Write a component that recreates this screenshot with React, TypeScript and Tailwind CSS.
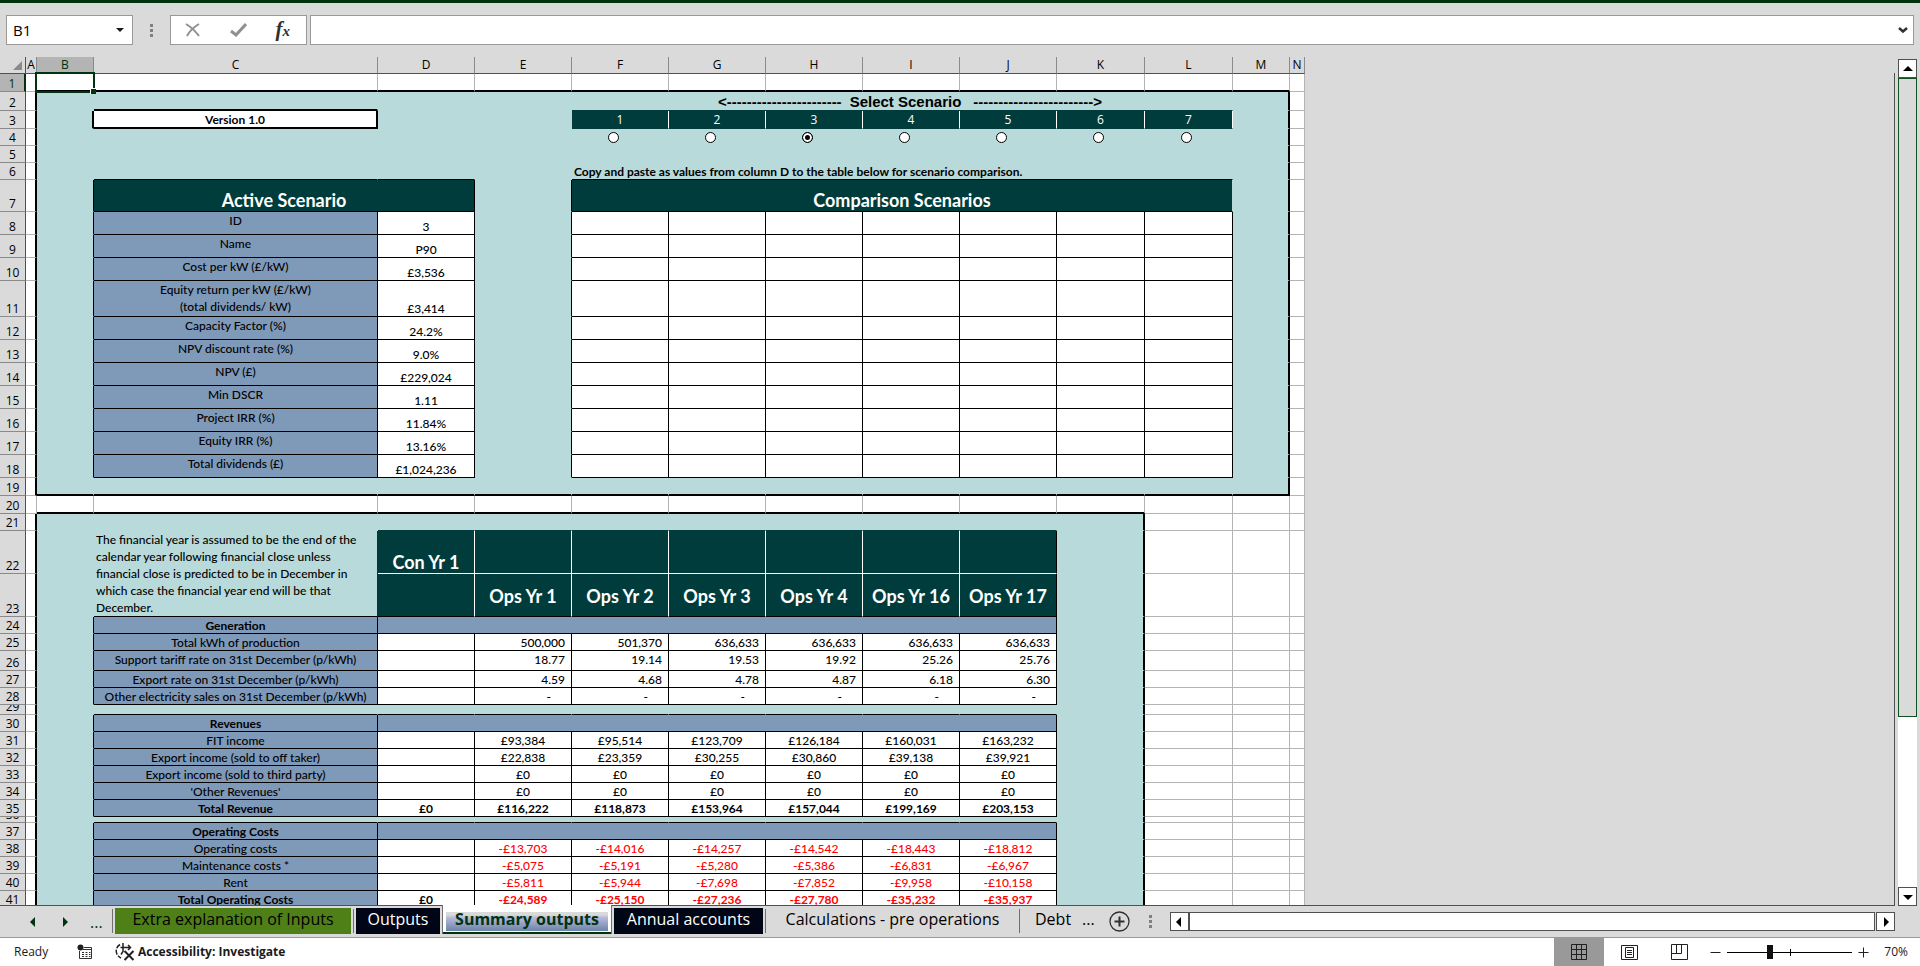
import type { ReactNode } from 'react';
import { clsx } from 'clsx';

const COLS = [
  { id: 'A', w: 11 },
  { id: 'B', w: 57 },
  { id: 'C', w: 284 },
  { id: 'D', w: 97 },
  { id: 'E', w: 97 },
  { id: 'F', w: 97 },
  { id: 'G', w: 97 },
  { id: 'H', w: 97 },
  { id: 'I', w: 97 },
  { id: 'J', w: 97 },
  { id: 'K', w: 88 },
  { id: 'L', w: 88 },
  { id: 'M', w: 57 },
  { id: 'N', w: 15 },
];
const HEADER_W = 26;
const SHEET_W = COLS.reduce((sum, c) => sum + c.w, HEADER_W);

// column indexes
const [A, B, C, D, E, F, , , , J, K, L, M] = COLS.map((_, i) => i);

const ROW_HEIGHTS = [
  18, 19, 18, 17, 17, 17, 32, 23, 23, 23, 36, 23, 23, 23, 23, 23, 23, 23, 18, 18, 17, 43, 43, 17, 17, 20, 17, 17, 10,
  17, 17, 17, 17, 17, 17, 6, 17, 17, 17, 17, 17,
];

const ACTIVE: Record<number, [string, string]> = {
  8: ['ID', '3'],
  9: ['Name', 'P90'],
  10: ['Cost per kW (£/kW)', '£3,536'],
  11: ['Equity return per kW (£/kW)\n(total dividends/ kW)', '£3,414'],
  12: ['Capacity Factor (%)', '24.2%'],
  13: ['NPV discount rate (%)', '9.0%'],
  14: ['NPV (£)', '£229,024'],
  15: ['Min DSCR', '1.11'],
  16: ['Project IRR (%)', '11.84%'],
  17: ['Equity IRR (%)', '13.16%'],
  18: ['Total dividends (£)', '£1,024,236'],
};

const SECTIONS: Record<number, string> = { 24: 'Generation', 30: 'Revenues', 37: 'Operating Costs' };

const YEARS = ['', 'Ops Yr 1', 'Ops Yr 2', 'Ops Yr 3', 'Ops Yr 4', 'Ops Yr 16', 'Ops Yr 17'];

const YEAR_NOTE = [
  'The financial year is assumed to be the end of the',
  'calendar year following financial close unless',
  'financial close is predicted to be in December in',
  'which case the financial year end will be that',
  'December.',
].join('\n');

// label, then one value for each of D..J
const LINES: Record<number, string[]> = {
  25: ['Total kWh of production', '', '500,000', '501,370', '636,633', '636,633', '636,633', '636,633'],
  26: ['Support tariff rate on 31st December (p/kWh)', '', '18.77', '19.14', '19.53', '19.92', '25.26', '25.76'],
  27: ['Export rate on 31st December (p/kWh)', '', '4.59', '4.68', '4.78', '4.87', '6.18', '6.30'],
  28: ['Other electricity sales on 31st December (p/kWh)', '', '-', '-', '-', '-', '-', '-'],
  31: ['FIT income', '', '£93,384', '£95,514', '£123,709', '£126,184', '£160,031', '£163,232'],
  32: ['Export income (sold to off taker)', '', '£22,838', '£23,359', '£30,255', '£30,860', '£39,138', '£39,921'],
  33: ['Export income (sold to third party)', '', '£0', '£0', '£0', '£0', '£0', '£0'],
  34: ["'Other Revenues'", '', '£0', '£0', '£0', '£0', '£0', '£0'],
  35: ['Total Revenue', '£0', '£116,222', '£118,873', '£153,964', '£157,044', '£199,169', '£203,153'],
  38: ['Operating costs', '', '-£13,703', '-£14,016', '-£14,257', '-£14,542', '-£18,443', '-£18,812'],
  39: ['Maintenance costs *', '', '-£5,075', '-£5,191', '-£5,280', '-£5,386', '-£6,831', '-£6,967'],
  40: ['Rent', '', '-£5,811', '-£5,944', '-£7,698', '-£7,852', '-£9,958', '-£10,158'],
  41: ['Total Operating Costs', '£0', '-£24,589', '-£25,150', '-£27,236', '-£27,780', '-£35,232', '-£35,937'],
};
const TOTAL_ROWS = [35, 41];

const between = (n: number, lo: number, hi: number) => n >= lo && n <= hi;
const inTopFrame = (r: number, c: number) => between(r, 2, 19) && between(c, B, M);
const inLowerFrame = (r: number, c: number) => r >= 21 && between(c, B, K);

type Fill = 'white' | 'mint' | 'teal' | 'blue';

function fillOf(r: number, c: number): Fill {
  if (!inTopFrame(r, c) && !inLowerFrame(r, c)) return 'white';
  if (r === 3 && c === C) return 'white';
  if (r === 3 && between(c, F, L)) return 'teal';
  if (r === 7 && (between(c, C, D) || between(c, F, L))) return 'teal';
  if (between(r, 8, 18)) {
    if (c === C) return 'blue';
    if (c === D || between(c, F, L)) return 'white';
  }
  if (between(r, 22, 23) && between(c, D, J)) return 'teal';
  if (SECTIONS[r] && between(c, C, J)) return 'blue';
  if (LINES[r]) {
    if (c === C) return 'blue';
    if (between(c, D, J)) return 'white';
  }
  return 'mint';
}

function rightOf(r: number, c: number) {
  if (c === A && (between(r, 2, 19) || r >= 21)) return 'border-r-2 border-r-black';
  if (c === M && between(r, 2, 19)) return 'border-r-2 border-r-black';
  if (c === K && r >= 21) return 'border-r-2 border-r-black';
  if (r === 3 && (c === B || c === C)) return 'border-r-2 border-r-black';
  if (r === 3 && between(c, F, L)) return 'border-r border-r-white';
  if (r === 7 && (c === B || c === D || c === E)) return 'border-r border-r-black';
  if (between(r, 8, 18) && between(c, B, L)) return 'border-r border-r-black';
  if (between(r, 22, 23)) {
    if (c === C) return 'border-r border-r-[#003c3c]';
    if (between(c, D, J - 1)) return 'border-r border-r-white';
    if (c === J) return 'border-r border-r-black';
  }
  if ((SECTIONS[r] || LINES[r]) && between(c, B, J)) return 'border-r border-r-black';
  if (inTopFrame(r, c) || inLowerFrame(r, c)) return 'border-r border-r-[#b8dada]';
  return 'border-r border-r-[#b4b4b4]';
}

function bottomOf(r: number, c: number) {
  if ((r === 1 || r === 19) && between(c, B, M)) return 'border-b-2 border-b-black';
  if (r === 20 && between(c, B, K)) return 'border-b-2 border-b-black';
  if ((r === 2 || r === 3) && c === C) return 'border-b-2 border-b-black';
  if ((r === 2 || r === 3) && between(c, F, L)) return 'border-b border-b-[#003c3c]';
  if (r === 6 && (between(c, C, D) || between(c, F, L))) return 'border-b border-b-black';
  if (between(r, 7, 18) && (between(c, C, D) || between(c, F, L))) return 'border-b border-b-black';
  if (r === 21 && between(c, D, J)) return 'border-b border-b-[#003c3c]';
  if (r === 22 && between(c, D, J)) return 'border-b border-b-white';
  if (r >= 23 && between(c, C, J)) return 'border-b border-b-black';
  if (inTopFrame(r, c) || inLowerFrame(r, c)) return 'border-b border-b-[#b8dada]';
  return 'border-b border-b-[#b4b4b4]';
}

const FILLS: Record<Fill, string> = {
  white: 'bg-white',
  mint: 'bg-[#b8dada]',
  teal: 'bg-[#003c3c] text-white',
  blue: 'bg-[#7f99b8]',
};

const TITLE = 'justify-center text-[18px] leading-[22px] font-bold';

type Content = { node?: ReactNode; className?: string; colSpan?: number; rowSpan?: number };

function contentOf(r: number, c: number): Content {
  if (r === 2 && c === F) {
    return {
      colSpan: 7,
      className: "items-center justify-center gap-2 pl-4 font-['Liberation_Sans',sans-serif] text-[15px] font-bold",
      node: (
        <>
          <span>{'<' + '-'.repeat(23)}</span>
          <span>Select Scenario</span>
          <span className="pl-1">{'-'.repeat(24) + '>'}</span>
        </>
      ),
    };
  }
  if (r === 3 && c === C) return { node: 'Version 1.0', className: 'items-end justify-center font-bold' };
  if (r === 3 && between(c, F, L)) {
    return { node: c - E, className: "items-center justify-center font-['Open_Sans',sans-serif]" };
  }
  if (r === 4 && between(c, F, L)) {
    return {
      className: 'items-center pl-9',
      node: (
        <input
          type="radio"
          name="scenario"
          aria-label={`Scenario ${c - E}`}
          defaultChecked={c - E === 3}
          className="size-[11px] appearance-none rounded-full border border-black bg-white checked:bg-black checked:shadow-[inset_0_0_0_2px_white]"
        />
      ),
    };
  }
  if (r === 6 && c === F) {
    return {
      colSpan: 7,
      className: 'items-end pl-[2px] font-bold',
      node: 'Copy and paste as values from column D to the table below for scenario comparison.',
    };
  }
  if (r === 7 && c === C) return { colSpan: 2, node: 'Active Scenario', className: clsx('items-end', TITLE) };
  if (r === 7 && c === F) return { colSpan: 7, node: 'Comparison Scenarios', className: clsx('items-end', TITLE) };
  if (ACTIVE[r] && c === C) {
    return { node: ACTIVE[r][0], className: 'items-start justify-center whitespace-pre text-center leading-[17px]' };
  }
  if (ACTIVE[r] && c === D) return { node: ACTIVE[r][1], className: 'items-end justify-center' };
  if (r === 22 && c === C) {
    return { rowSpan: 2, className: 'items-end whitespace-pre pl-[2px] leading-[17px]', node: YEAR_NOTE };
  }
  if (r === 22 && c === D) return { node: 'Con Yr 1', className: clsx('items-end', TITLE) };
  if (r === 23 && between(c, D, J)) return { node: YEARS[c - D], className: clsx('items-center pt-[2px]', TITLE) };
  if (SECTIONS[r] && c === C) return { node: SECTIONS[r], className: 'items-end justify-center font-bold' };
  if (SECTIONS[r] && c === D) return { colSpan: 7 };
  if (LINES[r] && between(c, C, J)) {
    const isValue = c > C;
    return {
      node: LINES[r][c - C],
      className: clsx(
        r === 26 ? 'items-start leading-[17px]' : 'items-end',
        isValue && r <= 28 ? 'justify-end' : 'justify-center',
        isValue && r <= 27 && 'pr-[6px]',
        isValue && r === 28 && 'pr-5',
        TOTAL_ROWS.includes(r) && 'font-bold',
        c > D && r >= 38 && 'text-[#ff0000]',
      ),
    };
  }
  return {};
}

function Cell({ r, c, content }: { r: number; c: number; content: Content }) {
  const { node, className, colSpan = 1, rowSpan = 1 } = content;
  const bottom = bottomOf(r + rowSpan - 1, c);
  let height = ROW_HEIGHTS[r - 1] - (bottom.startsWith('border-b-2') ? 2 : 1);
  if (rowSpan > 1) height += ROW_HEIGHTS[r];
  const selected = r === 1 && c === B;
  return (
    <td
      colSpan={colSpan}
      rowSpan={rowSpan}
      className={clsx('p-0', FILLS[fillOf(r, c)], rightOf(r, c + colSpan - 1), bottom, selected && 'relative')}
    >
      <div className={clsx('flex overflow-hidden', className)} style={{ height }}>
        {node}
      </div>
      {selected && (
        <div className="absolute -top-[2px] -right-[2px] -bottom-[3px] -left-[2px] z-10 border-2 border-[#00330f]">
          <div className="absolute -right-[3px] -bottom-[3px] size-[6px] border-t border-l border-white bg-[#00330f]" />
        </div>
      )}
    </td>
  );
}

function SheetRow({ r }: { r: number }) {
  const cells: ReactNode[] = [];
  for (let c = A; c < COLS.length; c++) {
    if (r === 23 && c === C) continue; // covered by the note in C22
    const content = contentOf(r, c);
    cells.push(<Cell key={c} r={r} c={c} content={content} />);
    c += (content.colSpan ?? 1) - 1;
  }
  return (
    <tr>
      <th
        scope="row"
        className={clsx(
          "border-b p-0 font-['Open_Sans',sans-serif] font-normal",
          r === 1
            ? 'border-r-2 border-r-[#00330f] border-b-[#8a8a8a] bg-[#b4b4b4] text-[#00330f]'
            : 'border-r border-r-[#505050] border-b-[#8a8a8a]',
        )}
      >
        <div className="flex items-end justify-center overflow-hidden" style={{ height: ROW_HEIGHTS[r - 1] - 1 }}>
          {r}
        </div>
      </th>
      {cells}
    </tr>
  );
}

function Sheet() {
  return (
    <table
      className="table-fixed border-separate border-spacing-0 font-['Lato',sans-serif] text-[12px] leading-[15px] font-medium whitespace-nowrap text-black"
      style={{ width: SHEET_W }}
    >
      <colgroup>
        <col style={{ width: HEADER_W }} />
        {COLS.map((c) => (
          <col key={c.id} style={{ width: c.w }} />
        ))}
      </colgroup>
      <thead>
        <tr>
          <td className="border-r border-b border-r-[#505050] border-b-[#505050] p-0">
            <svg viewBox="0 0 25 16" className="block h-4 w-[25px]" aria-hidden="true">
              <path d="M22 4v9h-9z" fill="#8a8a8a" />
            </svg>
          </td>
          {COLS.map((c) => (
            <th
              key={c.id}
              scope="col"
              className={clsx(
                "border-r border-b border-r-[#8a8a8a] border-b-[#505050] p-0 font-['Open_Sans',sans-serif] font-normal",
                c.id === 'B' && 'bg-[#b4b4b4] text-[#00330f]',
              )}
            >
              <div className="flex h-4 items-start justify-center">{c.id}</div>
            </th>
          ))}
        </tr>
      </thead>
      <tbody>
        {ROW_HEIGHTS.map((_, i) => (
          <SheetRow key={i} r={i + 1} />
        ))}
      </tbody>
    </table>
  );
}

function Grip() {
  return (
    <div className="flex flex-col gap-[2px]">
      <span className="size-[3px] bg-[#808080]" />
      <span className="size-[3px] bg-[#808080]" />
      <span className="size-[3px] bg-[#808080]" />
    </div>
  );
}

function Arrow({ d, label, className }: { d: string; label: string; className?: string }) {
  return (
    <button
      type="button"
      aria-label={label}
      className={clsx('flex size-[19px] shrink-0 items-center justify-center', className)}
    >
      <svg viewBox="0 0 10 10" className="size-[10px]">
        <path d={d} fill="currentColor" />
      </svg>
    </button>
  );
}

function FormulaBar() {
  return (
    <div className="flex items-center py-3 pr-[6px] pl-[6px]">
      <div className="flex h-[30px] w-[127px] items-center border border-[#999] bg-white pr-2 pl-[6px]">
        <input
          aria-label="Name box"
          defaultValue="B1"
          className="w-0 flex-1 bg-transparent text-[15px] text-black outline-none"
        />
        <button type="button" aria-label="Named ranges">
          <svg viewBox="0 0 8 5" className="h-[5px] w-2">
            <path d="M0 0h8L4 4z" fill="#1a1a1a" />
          </svg>
        </button>
      </div>
      <div className="flex w-[37px] justify-center">
        <Grip />
      </div>
      <div className="mr-[3px] flex h-[30px] w-[137px] items-center justify-between border border-[#999] bg-white pr-4 pl-[14px]">
        <button type="button" aria-label="Cancel">
          <svg viewBox="0 0 16 14" className="h-[14px] w-4" fill="none" stroke="#909090" strokeWidth="2">
            <path d="M1 1c5 3 10 8 13 12M14 1C9 4 4 9 2 13" />
          </svg>
        </button>
        <button type="button" aria-label="Enter">
          <svg viewBox="0 0 17 14" className="h-[14px] w-[17px]" fill="none" stroke="#909090" strokeWidth="3">
            <path d="M1 8l5 4L16 1" />
          </svg>
        </button>
        <button
          type="button"
          aria-label="Insert function"
          className="pb-[2px] font-['Liberation_Serif',serif] text-[21px] leading-none font-bold text-[#303030] italic"
        >
          f<span className="text-[15px]">x</span>
        </button>
      </div>
      <div className="flex h-[30px] flex-1 items-center border border-[#999] bg-white pr-[5px]">
        <input aria-label="Formula bar" className="h-full w-0 flex-1 px-2 text-[15px] outline-none" />
        <button type="button" aria-label="Expand formula bar">
          <svg viewBox="0 0 10 6" className="h-[6px] w-[10px]" fill="none" stroke="#303030" strokeWidth="2.5">
            <path d="M1 1l4 3.5L9 1" />
          </svg>
        </button>
      </div>
    </div>
  );
}

function Divider() {
  return <span className="mt-[3px] h-6 w-px shrink-0 bg-[#707070]" />;
}

function SheetTabs() {
  return (
    <div className="flex h-8 items-start border-b border-[#999] text-[16px] leading-[22px] whitespace-nowrap text-black">
      <div className="flex w-28 items-center pt-[6px] pl-[23px] text-[#00330f]">
        <Arrow d="M7 0v10L2 5z" label="Previous sheet" />
        <Arrow d="M3 0v10l5-5z" label="Next sheet" className="ml-[13px]" />
        <button type="button" aria-label="More sheets to the left" className="ml-4 h-5 leading-4">
          ...
        </button>
      </div>
      <Divider />
      <button type="button" className="mt-[2px] ml-[2px] h-[26px] w-[236px] bg-[#4f7f17] pb-1 text-black">
        Extra explanation of Inputs
      </button>
      <span className="w-[2px]" />
      <Divider />
      <button type="button" className="mt-[2px] ml-[2px] h-[26px] w-[84px] bg-[#000615] pb-1 text-white">
        Outputs
      </button>
      <div className="relative z-10 -mt-px ml-[2px] w-[170px] border-x border-x-[#707070] bg-white pt-[7px]">
        <button
          type="button"
          aria-current="page"
          className="mx-[3px] block h-[19px] w-[162px] bg-linear-to-b from-[#dadada] from-15% via-[#b8b8dc] via-30% to-[#6a84a8] pb-1 leading-[15px] font-bold text-[#00330f]"
        >
          Summary outputs
        </button>
        <div className="mt-px h-[2px] bg-[#00330f]" />
      </div>
      <button type="button" className="mt-[2px] ml-[2px] h-[26px] w-[149px] bg-[#000615] pb-1 text-white">
        Annual accounts
      </button>
      <span className="w-[2px]" />
      <Divider />
      <button type="button" className="mt-[2px] w-[253px] text-center">
        Calculations - pre operations
      </button>
      <Divider />
      <button type="button" className="mt-[2px] ml-[15px]">
        Debt
      </button>
      <button type="button" aria-label="More sheets to the right" className="mt-[2px] ml-[11px]">
        ...
      </button>
      <button type="button" aria-label="New sheet" className="mt-[5px] ml-[14px]">
        <svg viewBox="0 0 21 21" className="size-[21px]" fill="none" stroke="#303030">
          <circle cx="10.5" cy="10.5" r="9.5" strokeWidth="1.3" />
          <path d="M10.5 5.5v10M5.5 10.5h10" strokeWidth="2" />
        </svg>
      </button>
      <div className="mt-[9px] mr-[18px] ml-[19px]">
        <Grip />
      </div>
      <div className="mt-[6px] mr-[25px] flex flex-1 text-black">
        <Arrow d="M7 0v10L2 5z" label="Scroll left" className="border border-[#505050] bg-white" />
        <div className="mr-px h-[19px] flex-1 border border-[#505050] bg-white" />
        <Arrow d="M3 0v10l5-5z" label="Scroll right" className="border border-[#505050] bg-white" />
      </div>
    </div>
  );
}

function StatusBar() {
  return (
    <div className="flex h-7 items-center bg-white pr-3 pl-[14px] text-[12px] text-[#1a1a1a]">
      <span className="w-[63px]">Ready</span>
      <button type="button" aria-label="Macro recording">
        <svg viewBox="0 0 16 16" className="size-4" fill="none" stroke="#303030">
          <path d="M2.500 7v7.500h12V3.500H7M6 5.500h8" />
          <path d="M5 8.500h2M8.500 8.500h2M12 8.500h1.500M5 10.500h2M8.500 10.500h2M12 10.500h1.500M5 12.500h2M8.500 12.500h2M12 12.500h1.500" />
          <circle cx="3.500" cy="3.500" r="3" fill="#202020" stroke="none" />
        </svg>
      </button>
      <button type="button" className="ml-[22px] flex items-center gap-[3px] font-bold">
        <svg viewBox="0 0 20 18" className="h-[18px] w-5" fill="none" stroke="#202020" strokeWidth="1.500">
          <path d="M5 1.500C-.5 5 0 12 6 15" strokeDasharray="5 1.500" />
          <path d="M8 0v5M5.500 4.500h10M13 2l2.500 2.500L13 7M8 4.500v4l-2 3" />
          <path d="M9.500 8l9 9M18.500 8l-9 9" strokeWidth="2" />
        </svg>
        Accessibility: Investigate
      </button>
      <div className="ml-auto flex h-7 items-center">
        <button type="button" aria-label="Normal view" className="flex h-7 w-[50px] items-center justify-center bg-[#999]">
          <svg viewBox="0 0 16 16" className="size-4" fill="none" stroke="#202020">
            <path d="M.5.5h15v15H.5zM5.500.5v15M10.500.5v15M.5 5.500h15M.5 10.500h15" />
          </svg>
        </button>
        <button type="button" aria-label="Page layout view" className="flex h-7 w-[50px] items-center justify-center">
          <svg viewBox="0 0 17 15" className="h-[15px] w-[17px]" fill="none" stroke="#202020">
            <path d="M.5.5h16v14H.5zM4.500 2.500h8v10h-8zM6 5.500h5M6 7.500h5M6 9.500h5" />
          </svg>
        </button>
        <button type="button" aria-label="Page break preview" className="flex h-7 w-[50px] items-center justify-center">
          <svg viewBox="0 0 17 16" className="h-4 w-[17px]" fill="none" stroke="#202020">
            <path d="M.5.5h16v15H.5zM.5 9.500h10v-9M5.500.5v9" />
          </svg>
        </button>
        <button type="button" aria-label="Zoom out" className="flex w-[23px] justify-center">
          <svg viewBox="0 0 11 11" className="size-[11px]" stroke="#202020">
            <path d="M.5 5.500h10" />
          </svg>
        </button>
        <div className="relative flex h-7 w-[125px] items-center">
          <input
            type="range"
            aria-label="Zoom"
            aria-valuetext="70%"
            defaultValue={34}
            className="h-[14px] w-full appearance-none bg-transparent bg-linear-to-r from-black to-black bg-[length:100%_1px] bg-center bg-no-repeat [&::-webkit-slider-thumb]:h-[14px] [&::-webkit-slider-thumb]:w-[6px] [&::-webkit-slider-thumb]:appearance-none [&::-webkit-slider-thumb]:bg-[#101010]"
          />
          <span className="pointer-events-none absolute left-1/2 h-[7px] w-px bg-black" />
        </div>
        <button type="button" aria-label="Zoom in" className="flex w-[22px] justify-center">
          <svg viewBox="0 0 11 11" className="size-[11px]" stroke="#202020">
            <path d="M.5 5.500h10M5.500.5v10" />
          </svg>
        </button>
        <button type="button" className="w-[34px] text-right">
          70%
        </button>
      </div>
    </div>
  );
}

export default function App() {
  return (
    <div className="flex h-screen flex-col overflow-hidden bg-[#dadada] font-['Open_Sans',sans-serif]">
      <div className="h-[3px] shrink-0 bg-[#00330f]" />
      <FormulaBar />
      <div className="flex min-h-0 flex-1">
        <div className="relative min-w-0 flex-1 overflow-hidden border-b border-[#505050]">
          <Sheet />
          <div className="absolute top-4 right-0 bottom-0 w-px bg-[#505050]" />
        </div>
        <div className="mr-[3px] ml-[3px] flex w-[19px] flex-col pt-[2px] text-black">
          <Arrow d="M0 7h10L5 2z" label="Scroll up" className="border border-[#505050] bg-white" />
          <div className="flex-1 bg-white">
            <div className="h-[79%] border border-[#0f4f22] bg-[#dadada]" />
          </div>
          <Arrow d="M0 3h10L5 8z" label="Scroll down" className="border border-[#505050] bg-white" />
        </div>
      </div>
      <SheetTabs />
      <StatusBar />
    </div>
  );
}
